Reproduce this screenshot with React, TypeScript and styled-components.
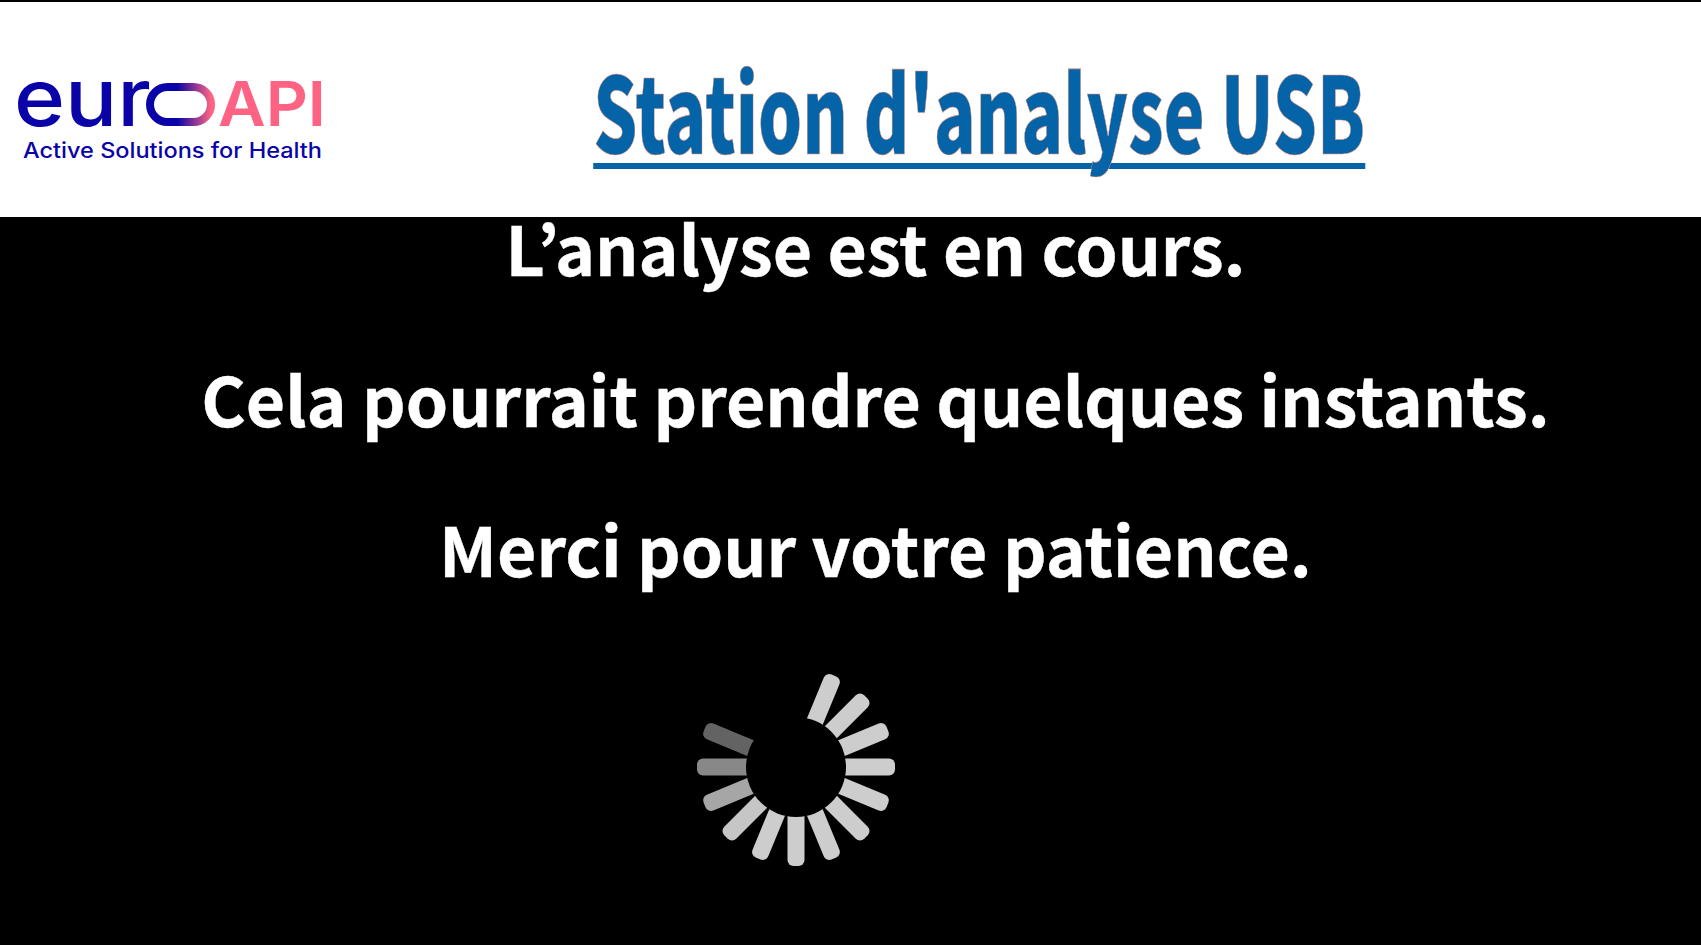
import React from "react";
import styled, { createGlobalStyle } from "styled-components";

const spokes = [
  { angle: -67.5, color: "#cdcdcd" },
  { angle: -45, color: "#cdcdcd" },
  { angle: -22.5, color: "#cdcdcd" },
  { angle: 0, color: "#cdcdcd" },
  { angle: 22.5, color: "#cdcdcd" },
  { angle: 45, color: "#cdcdcd" },
  { angle: 67.5, color: "#cdcdcd" },
  { angle: 90, color: "#cdcdcd" },
  { angle: 112.5, color: "#cdcdcd" },
  { angle: 135, color: "#c6c6c6" },
  { angle: 157.5, color: "#a6a6a6" },
  { angle: 180, color: "#888888" },
  { angle: 202.5, color: "#636363" },
];

const Logo = () => (
  <LogoSvg viewBox="0 0 340 110" width="340" height="110">
    <defs>
      <linearGradient id="pill" x1="0" x2="1" y1="0" y2="0">
        <stop offset="0.45" stopColor="#0a04a8" />
        <stop offset="1" stopColor="#ff6384" />
      </linearGradient>
    </defs>
    <text x="14" y="66" fontFamily="Inter" fontWeight="500" fontSize="80" fill="#0a04a8" textLength="137" lengthAdjust="spacingAndGlyphs">eur</text>
    <rect x="150" y="27" width="61" height="35" rx="17.5" fill="none" stroke="url(#pill)" strokeWidth="8" />
    <text x="218" y="66" fontFamily="Inter" fontWeight="600" fontSize="62" fill="#ff6384" textLength="108" lengthAdjust="spacingAndGlyphs">API</text>
    <text x="23" y="98" fontFamily="Inter" fontWeight="500" fontSize="21" fill="#0a04a8" textLength="299" lengthAdjust="spacingAndGlyphs">Active Solutions for Health</text>
  </LogoSvg>
);

const Spinner = () => (
  <SpinnerSvg viewBox="-105 -105 210 210" width="210" height="210">
    {spokes.map((s) => (
      <rect
        key={s.angle}
        x="40"
        y="-8.5"
        width="59"
        height="17"
        rx="6"
        fill={s.color}
        transform={`rotate(${s.angle})`}
      />
    ))}
    <circle cx="0" cy="0" r="50" fill="#000" />
  </SpinnerSvg>
);

export default function App() {
  return (
    <>
      <GlobalStyle />
      <Page>
        <Header>
          <Logo />
          <TitleWrap>
            <Title>Station d'analyse USB</Title>
          </TitleWrap>
        </Header>
        <Body>
          <Message>L’analyse est en cours.</Message>
          <Message>Cela pourrait prendre quelques instants.</Message>
          <Message>Merci pour votre patience.</Message>
          <Spinner />
        </Body>
      </Page>
    </>
  );
}

const GlobalStyle = createGlobalStyle`
  html, body {
    margin: 0;
    padding: 0;
    background: #000;
  }
`;

const Page = styled.div`
  width: 1701px;
  height: 945px;
  overflow: hidden;
  display: flex;
  flex-direction: column;
`;

const Header = styled.header`
  box-sizing: border-box;
  height: 217px;
  border-top: 2px solid #000;
  background: #fff;
  display: flex;
  align-items: center;
`;

const LogoSvg = styled.svg`
  flex: none;
  display: block;
  margin-top: 11px;
`;

const TitleWrap = styled.div`
  width: 1278px;
  display: flex;
  justify-content: center;
`;

const Title = styled.h1`
  margin: -4px 0 0;
  font-family: "Noto Sans CJK JP", "Open Sans", sans-serif;
  font-size: 106px;
  font-weight: 900;
  line-height: 130px;
  color: #0563a8;
  white-space: nowrap;
  -webkit-text-stroke: 0.6px #e9977f;
  text-decoration: underline #0563a8;
  text-decoration-thickness: 6px;
  text-underline-offset: 9px;
  text-decoration-skip-ink: none;
  transform: scaleX(0.654);
`;

const Body = styled.main`
  flex: 1;
  background: #000;
  display: flex;
  flex-direction: column;
  align-items: center;
  padding-left: 50px;
`;

const Message = styled.p`
  margin: 0;
  font-family: "Noto Sans CJK JP", "Open Sans", sans-serif;
  font-size: 67.9px;
  font-weight: 700;
  line-height: 150.5px;
  color: #fff;
  white-space: nowrap;
  -webkit-text-stroke: 0.4px #fff;
  &:first-child {
    margin-top: -45px;
  }
`;

const SpinnerSvg = styled.svg`
  display: block;
  flex: none;
  margin-top: 38.5px;
  margin-right: 160px;
`;
